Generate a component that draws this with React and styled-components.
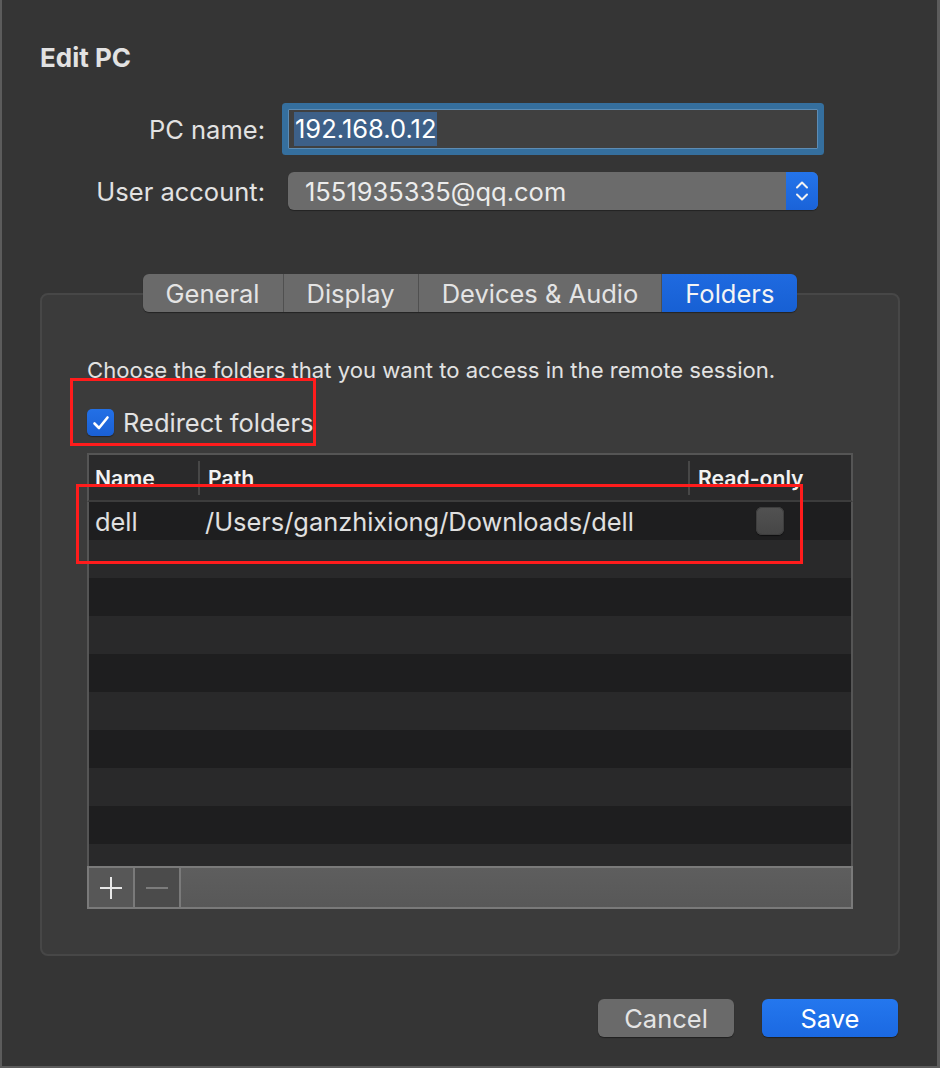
import styled, { createGlobalStyle } from "styled-components"

const GlobalStyle = createGlobalStyle`
    html, body {
        margin: 0;
        padding: 0;
        background: #353535;
    }
    * {
        box-sizing: border-box;
    }
`

const tabs = ["General", "Display", "Devices & Audio", "Folders"]
const folders = [{ name: "dell", path: "/Users/ganzhixiong/Downloads/dell", readOnly: false }]
const ROWS = 10

const Chevrons = () => (
    <svg width="14" height="24" viewBox="0 0 14 24" fill="none" stroke="#f2f2f2" strokeWidth="2" strokeLinecap="round" strokeLinejoin="round">
        <path d="M2 8.5 L7 3.5 L12 8.5" />
        <path d="M2 15.5 L7 20.5 L12 15.5" />
    </svg>
)

const Check = () => (
    <svg width="18" height="16" viewBox="0 0 18 16" fill="none" stroke="#ffffff" strokeWidth="2.6" strokeLinecap="round" strokeLinejoin="round">
        <path d="M2.5 8.5 L7 13 L15.5 2.5" />
    </svg>
)

const App = () => {
    return (
        <Window>
            <GlobalStyle />
            <Title>Edit PC</Title>
            <Form>
                <Label>PC name:</Label>
                <TextField>
                    <Selected>192.168.0.12</Selected>
                </TextField>
                <Label>User account:</Label>
                <Popup>
                    <PopupValue>1551935335@qq.com</PopupValue>
                    <Stepper><Chevrons /></Stepper>
                </Popup>
            </Form>

            <TabArea>
                <TabBar>
                    {tabs.map((t) => (
                        <Tab key={t} active={t === "Folders"}>{t}</Tab>
                    ))}
                </TabBar>
                <GroupBox>
                    <Description>Choose the folders that you want to access in the remote session.</Description>
                    <CheckRow>
                        <BlueCheck><Check /></BlueCheck>
                        <span>Redirect folders</span>
                    </CheckRow>
                    <Table>
                        <HeaderRow>
                            <HeadCell>Name</HeadCell>
                            <HeadCell divider>Path</HeadCell>
                            <HeadCell divider>Read-only</HeadCell>
                        </HeaderRow>
                        <Body>
                            {Array.from({ length: ROWS }).map((_, i) => {
                                const f = folders[i]
                                return (
                                    <Row key={i} odd={i % 2 === 1}>
                                        <Cell>{f?.name}</Cell>
                                        <Cell>{f?.path}</Cell>
                                        <CheckCell>{f && <GrayCheck />}</CheckCell>
                                    </Row>
                                )
                            })}
                        </Body>
                        <BottomBar>
                            <BarButton>
                                <svg width="24" height="24" viewBox="0 0 24 24" stroke="#e8e8e8" strokeWidth="2">
                                    <path d="M12 1 V23 M1 12 H23" />
                                </svg>
                            </BarButton>
                            <BarButton disabled>
                                <svg width="24" height="4" viewBox="0 0 24 4" stroke="#7c7c7c" strokeWidth="2">
                                    <path d="M1 2 H23" />
                                </svg>
                            </BarButton>
                            <BarFill />
                        </BottomBar>
                    </Table>
                </GroupBox>
            </TabArea>

            <Actions>
                <Button>Cancel</Button>
                <Button primary>Save</Button>
            </Actions>

            <Annotation style={{ left: 68, top: 378, width: 246, height: 68 }} />
            <Annotation style={{ left: 74, top: 484, width: 727, height: 80 }} />
        </Window>
    )
}

export default App

const Window = styled.div`
    position: relative;
    width: 940px;
    height: 1068px;
    background: #353535;
    border-left: 2px solid #5c5c5c;
    border-right: 3px solid #5c5c5c;
    border-bottom: 2px solid #5c5c5c;
    padding: 42px 37px 0 38px;
    font-family: Inter, "Liberation Sans", sans-serif;
    color: #e2e2e2;
    display: flex;
    flex-direction: column;
`
const Title = styled.div`
    font-size: 26px;
    line-height: 32px;
    font-weight: 700;
`
const Form = styled.div`
    margin-top: 35px;
    display: grid;
    grid-template-columns: 225px 530px;
    column-gap: 23px;
    row-gap: 23px;
    align-items: center;
`
const Label = styled.div`
    text-align: right;
    font-size: 25.5px;
`
const TextField = styled.div`
    height: 40px;
    background: #404040;
    border: 1px solid #5d8cb4;
    box-shadow: 0 0 0 6px #356f9e;
    border-radius: 1px;
    display: flex;
    align-items: center;
    padding-left: 5px;
`
const Selected = styled.span`
    background: #3d6088;
    color: #ffffff;
    font-size: 25.5px;
    line-height: 34px;
    padding: 0 1px;
`
const Popup = styled.div`
    height: 38px;
    display: flex;
    border-radius: 6px;
    overflow: hidden;
    background: #6b6b6b;
    box-shadow: 0 1px 1px rgba(0, 0, 0, 0.35);
`
const PopupValue = styled.div`
    flex: 1;
    display: flex;
    align-items: center;
    padding-left: 17px;
    font-size: 25.5px;
    color: #ececec;
`
const Stepper = styled.div`
    width: 32px;
    display: flex;
    align-items: center;
    justify-content: center;
    background: linear-gradient(#2474ea, #1a63d9);
`
const TabArea = styled.div`
    margin-top: 64px;
    display: flex;
    flex-direction: column;
`
const TabBar = styled.div`
    position: relative;
    z-index: 1;
    align-self: center;
    display: flex;
    height: 38px;
    border-radius: 6px;
    overflow: hidden;
    box-shadow: 0 1px 1px rgba(0, 0, 0, 0.4);
`
const Tab = styled.div`
    display: flex;
    align-items: center;
    padding: 0 23px;
    font-size: 25.5px;
    color: ${(p) => (p.active ? "#f4f4f4" : "#e4e4e4")};
    background: ${(p) => (p.active ? "linear-gradient(#1f6ae0, #1760d4)" : "#6a6a6a")};
    & + & {
        border-left: 1px solid #505050;
    }
`
const GroupBox = styled.div`
    margin-top: -19px;
    width: 860px;
    background: #3b3b3b;
    border: 2px solid #474747;
    border-radius: 8px;
    padding: 61px 45px 45px 45px;
`
const Description = styled.div`
    font-size: 22.1px;
    line-height: 28px;
`
const CheckRow = styled.div`
    margin-top: 25px;
    display: flex;
    align-items: center;
    gap: 9px;
    font-size: 25.5px;
    height: 27px;
`
const BlueCheck = styled.div`
    width: 27px;
    height: 27px;
    border-radius: 5px;
    background: linear-gradient(#2370e6, #1a60d4);
    display: flex;
    align-items: center;
    justify-content: center;
    box-shadow: 0 1px 1px rgba(0, 0, 0, 0.4);
`
const Table = styled.div`
    margin-top: 17px;
    display: flex;
    flex-direction: column;
`
const HeaderRow = styled.div`
    display: grid;
    grid-template-columns: 110px 490px 1fr;
    align-items: center;
    height: 49px;
    background: #2a2a2b;
    border: 2px solid #555555;
    border-bottom: 2px solid #3c3c3c;
`
const HeadCell = styled.div`
    height: 34px;
    display: flex;
    align-items: center;
    padding-left: ${(p) => (p.divider ? "8px" : "6px")};
    border-left: ${(p) => (p.divider ? "2px solid #474747" : "none")};
    margin-left: ${(p) => (p.divider ? "-1px" : "0")};
    font-size: 21.2px;
    font-weight: 600;
    color: #f2f2f2;
    white-space: nowrap;
`
const Body = styled.div`
    height: 364px;
    overflow: hidden;
    border-left: 2px solid #555555;
    border-right: 2px solid #555555;
`
const Row = styled.div`
    display: grid;
    grid-template-columns: 110px 490px 1fr;
    align-items: center;
    height: 38px;
    background: ${(p) => (p.odd ? "#29292a" : "#1e1e1f")};
`
const Cell = styled.div`
    padding-left: 6px;
    font-size: 25.4px;
    color: #e0e0e0;
    white-space: nowrap;
`
const CheckCell = styled.div`
    display: flex;
    justify-content: center;
`
const GrayCheck = styled.div`
    width: 28px;
    height: 28px;
    border-radius: 6px;
    background: linear-gradient(#525252, #464646);
    box-shadow: inset 0 0 0 1px #3e3e3e, 0 1px 1px rgba(0, 0, 0, 0.5);
`
const BottomBar = styled.div`
    display: flex;
    height: 43px;
    border: 2px solid #7a7a7a;
    background: #5a5a5a;
`
const BarButton = styled.div`
    width: 46px;
    display: flex;
    align-items: center;
    justify-content: center;
    background: ${(p) => (p.disabled ? "#4b4b4b" : "#575757")};
    border-right: 2px solid #7a7a7a;
`
const BarFill = styled.div`
    flex: 1;
    background: linear-gradient(#5e5e5e, #585858);
`
const Actions = styled.div`
    margin-top: 43px;
    display: flex;
    justify-content: flex-end;
    gap: 28px;
    padding-right: 2px;
`
const Button = styled.div`
    width: 136px;
    height: 38px;
    border-radius: 6px;
    display: flex;
    align-items: center;
    justify-content: center;
    font-size: 25.5px;
    color: ${(p) => (p.primary ? "#ffffff" : "#e4e4e4")};
    background: ${(p) => (p.primary ? "linear-gradient(#2477ee, #1b69e2)" : "#6a6a6a")};
    box-shadow: 0 1px 1px rgba(0, 0, 0, 0.4);
`
const Annotation = styled.div`
    position: absolute;
    border: 3px solid #ff1c1c;
    pointer-events: none;
`
